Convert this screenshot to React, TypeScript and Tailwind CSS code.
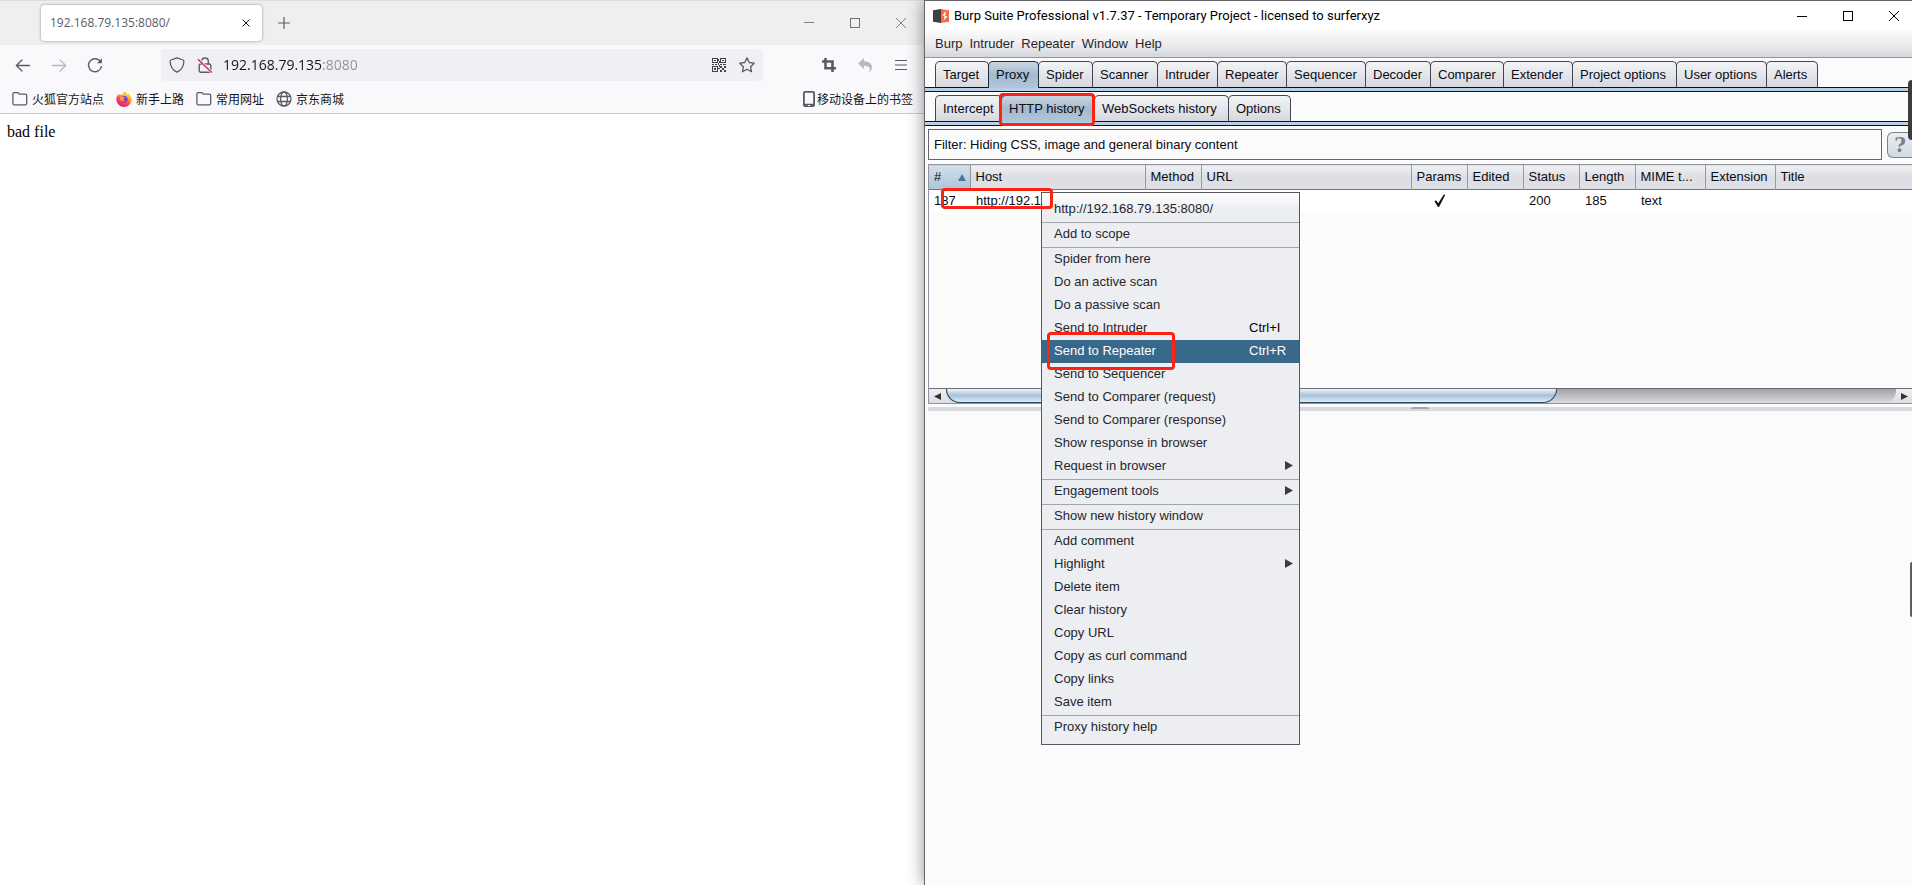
import clsx from "clsx";

const bookmarks = [
  { label: "火狐官方站点", icon: FolderIcon },
  { label: "新手上路", icon: FirefoxIcon },
  { label: "常用网址", icon: FolderIcon },
  { label: "京东商城", icon: GlobeIcon },
];

const menuBar = ["Burp", "Intruder", "Repeater", "Window", "Help"];

type Tab = { label: string; width: string };

const mainTabs: Tab[] = [
  { label: "Target", width: "w-[54px]" },
  { label: "Proxy", width: "w-[51px]" },
  { label: "Spider", width: "w-[55px]" },
  { label: "Scanner", width: "w-[66px]" },
  { label: "Intruder", width: "w-[61px]" },
  { label: "Repeater", width: "w-[70px]" },
  { label: "Sequencer", width: "w-[80px]" },
  { label: "Decoder", width: "w-[66px]" },
  { label: "Comparer", width: "w-[74px]" },
  { label: "Extender", width: "w-[70px]" },
  { label: "Project options", width: "w-[105px]" },
  { label: "User options", width: "w-[91px]" },
  { label: "Alerts", width: "w-[52px]" },
];

const proxyTabs: Tab[] = [
  { label: "Intercept", width: "w-[67px]" },
  { label: "HTTP history", width: "w-[94px]" },
  { label: "WebSockets history", width: "w-[135px]" },
  { label: "Options", width: "w-[63px]" },
];

const columns = [
  { label: "#", width: "w-[41px]" },
  { label: "Host", width: "w-[175px]" },
  { label: "Method", width: "w-[56px]" },
  { label: "URL", width: "w-[210px]" },
  { label: "Params", width: "w-[56px]" },
  { label: "Edited", width: "w-[56px]" },
  { label: "Status", width: "w-[56px]" },
  { label: "Length", width: "w-[56px]" },
  { label: "MIME t...", width: "w-[70px]" },
  { label: "Extension", width: "w-[70px]" },
  { label: "Title", width: "" },
];

type MenuEntry = {
  label: string;
  shortcut?: string;
  submenu?: boolean;
  active?: boolean;
};

const contextMenu: MenuEntry[][] = [
  [{ label: "http://192.168.79.135:8080/" }],
  [{ label: "Add to scope" }],
  [
    { label: "Spider from here" },
    { label: "Do an active scan" },
    { label: "Do a passive scan" },
    { label: "Send to Intruder", shortcut: "Ctrl+I" },
    { label: "Send to Repeater", shortcut: "Ctrl+R", active: true },
    { label: "Send to Sequencer" },
    { label: "Send to Comparer (request)" },
    { label: "Send to Comparer (response)" },
    { label: "Show response in browser" },
    { label: "Request in browser", submenu: true },
  ],
  [{ label: "Engagement tools", submenu: true }],
  [{ label: "Show new history window" }],
  [
    { label: "Add comment" },
    { label: "Highlight", submenu: true },
    { label: "Delete item" },
    { label: "Clear history" },
    { label: "Copy URL" },
    { label: "Copy as curl command" },
    { label: "Copy links" },
    { label: "Save item" },
  ],
  [{ label: "Proxy history help" }],
];

function FolderIcon() {
  return (
    <svg width="16" height="16" viewBox="0 0 16 16" fill="none" stroke="#5b5b66" strokeWidth="1.3">
      <path d="M.9 12.4V3a1.4 1.4 0 0 1 1.4-1.4h3.2c.5 0 .9.2 1.1.6l.7.9h6a1.4 1.4 0 0 1 1.4 1.4v7.9a1.4 1.4 0 0 1-1.4 1.4h-11A1.4 1.4 0 0 1 .9 12.4z" />
    </svg>
  );
}

function FirefoxIcon() {
  return (
    <svg width="16" height="16" viewBox="0 0 16 16">
      <defs>
        <linearGradient id="fox" x1="0.8" y1="0.05" x2="0.25" y2="1">
          <stop offset="0" stopColor="#fff44f" />
          <stop offset="0.3" stopColor="#ffb13b" />
          <stop offset="0.6" stopColor="#ff4a45" />
          <stop offset="1" stopColor="#e31587" />
        </linearGradient>
      </defs>
      <path
        d="M8.7.2c1.7 1 2.3 2.2 2.8 3.3.5-.2.6-.8.5-1.2 2.2 1.4 3.7 3.6 3.7 6.1A7.7 7.5 0 0 1 .3 8.4c0-2.1.7-4 1.9-5.1l.3 1.1c.5-.8 1-1.3 1.7-1.7l.2 1.3c.6-.3 1.4-.4 2.1-.3C6.8 2.3 7.6 1 8.7.2z"
        fill="url(#fox)"
      />
      <circle cx="8.3" cy="8.3" r="3.3" fill="#7a3fe0" />
      <path d="M3.8 6.2c1-.9 2.2-.9 3.2-.2l2.1.5c-.2.8-1.3 1.1-1.8 1.5-.2.7.4 1.5 1.6 1.4-1.3 1.5-4 1-4.7-.9z" fill="#ff9640" />
    </svg>
  );
}

function GlobeIcon() {
  return (
    <svg width="16" height="16" viewBox="0 0 16 16" fill="none" stroke="#5b5b66" strokeWidth="1.3">
      <circle cx="8" cy="8" r="7" />
      <ellipse cx="8" cy="8" rx="3.4" ry="7" />
      <path d="M1.5 5.5h13M1.5 10.5h13" />
    </svg>
  );
}

function ShieldIcon() {
  return (
    <svg width="16" height="16" viewBox="0 0 16 16" fill="none" stroke="#5b5b66" strokeWidth="1.3" strokeLinejoin="round">
      <path d="M8 .8 14 3c.6.2.9.7.9 1.2C14.7 9.5 12 13.2 8 15.2 4 13.2 1.3 9.5 1.1 4.2c0-.5.3-1 .9-1.2z" />
    </svg>
  );
}

function LockSlashIcon() {
  return (
    <svg width="16" height="16" viewBox="0 0 16 16" fill="none" stroke="#5b5b66" strokeWidth="1.4">
      <path d="M4.7 7V4.3a3.3 3.3 0 0 1 6.6 0V7" />
      <rect x="2.2" y="7" width="11.6" height="8.2" rx="1.4" />
      <path d="M1.2 2 15 15.6" stroke="#f0f0f4" strokeWidth="3" />
      <path d="M1 2.2 14.8 15.6" stroke="#e22850" strokeWidth="1.4" />
    </svg>
  );
}

function QrIcon() {
  return (
    <svg width="14" height="14" viewBox="0 0 14 14" fill="#42414d">
      <path
        fillRule="evenodd"
        d="M0 0h6v5H0zM1 1v3h4V1zM8 0h6v5H8zM9 1v3h4V1zM0 8h6v6H0zM1 9v4h4V9z"
      />
      <path d="M2 2h2v1H2zM10 2h2v1h-2zM2 10h2v2H2zM6 1h1v2H6zM7 3h1v2H7zM6 5h1v2H6zM0 6h2v1H0zM3 6h2v1H3zM8 6h2v1H8zM11 6h3v1h-3zM7 7h1v2H7zM8 8h2v2H8zM12 8h2v2h-2zM10 10h2v2h-2zM8 12h2v2H8zM12 12h2v2h-2zM6 10h2v1H6z" />
    </svg>
  );
}

function StarIcon() {
  return (
    <svg width="16" height="16" viewBox="0 0 16 16" fill="none" stroke="#5b5b66" strokeWidth="1.3" strokeLinejoin="round">
      <path d="M8 .9l2.2 4.6 5 .7-3.6 3.5.9 5L8 12.3l-4.5 2.4.9-5L.8 6.2l5-.7z" />
    </svg>
  );
}

function BurpLogo() {
  return (
    <svg width="16" height="14" viewBox="0 0 16 14" className="shrink-0">
      <path d="M0 1.2 8 0v14L0 12.8z" fill="#3f4040" />
      <path d="M8 0l8 1.2v11.6L8 14z" fill="#f76b3c" />
      <path d="M12.8 1.8 9.3 6.8h2.2l-.9 5L14.5 7h-2.3z" fill="#fff" />
    </svg>
  );
}

function BrowserWindow() {
  return (
    <section className="flex min-w-0 flex-col bg-white">
      {/* Tab strip */}
      <div className="flex h-[45px] items-center border-t border-[#dedede] bg-[#efefef]">
        <div className="ml-[41px] flex h-9 w-[221px] items-center justify-between rounded bg-white pr-[11px] pl-[9px] shadow-[0_0_3px_rgba(0,0,0,0.4)]">
          <span className="font-['Open_Sans',sans-serif] text-xs text-[#5b5b66]">192.168.79.135:8080/</span>
          <button aria-label="Close tab">
            <svg width="10" height="10" viewBox="0 0 10 10" stroke="#15141a">
              <path d="M1.5 1.5l7 7M8.5 1.5l-7 7" />
            </svg>
          </button>
        </div>
        <button aria-label="New tab" className="ml-4">
          <svg width="12" height="12" viewBox="0 0 12 12" stroke="#5b5b66" strokeWidth="1.2">
            <path d="M6 0v12M0 6h12" />
          </svg>
        </button>
        <div className="ml-auto flex">
          <button aria-label="Minimize" className="flex w-[46px] justify-center">
            <svg width="10" height="10" viewBox="0 0 10 10" stroke="#808080">
              <path d="M0 4.5h10" />
            </svg>
          </button>
          <button aria-label="Maximize" className="flex w-[46px] justify-center">
            <svg width="10" height="10" viewBox="0 0 10 10" fill="none" stroke="#707070">
              <rect x=".5" y=".5" width="9" height="9" />
            </svg>
          </button>
          <button aria-label="Close" className="flex w-[46px] justify-center">
            <svg width="10" height="10" viewBox="0 0 10 10" stroke="#808080">
              <path d="M0 0l10 10M10 0L0 10" />
            </svg>
          </button>
        </div>
      </div>

      {/* Navigation */}
      <div className="flex h-10 items-center bg-[#f9f9fb] px-[5px]">
        <button aria-label="Back" className="flex w-9 justify-center">
          <svg width="16" height="16" viewBox="0 0 16 16" fill="none" stroke="#5b5b66" strokeWidth="1.3" strokeLinecap="round" strokeLinejoin="round">
            <path d="M14.5 8.5h-13M7 3 1.3 8.5 7 14" />
          </svg>
        </button>
        <button aria-label="Forward" className="flex w-9 justify-center">
          <svg width="16" height="16" viewBox="0 0 16 16" fill="none" stroke="#b9b9bf" strokeWidth="1.3" strokeLinecap="round" strokeLinejoin="round">
            <path d="M1.5 8.5h13M9 3l5.7 5.5L9 14" />
          </svg>
        </button>
        <button aria-label="Reload" className="flex w-9 justify-center">
          <svg width="16" height="16" viewBox="0 0 16 16" fill="none" stroke="#5b5b66" strokeWidth="1.4">
            <path d="M13.8 5.2A6.5 6.5 0 1 0 14.5 9" />
            <path d="M14.9 1.3v5H10z" fill="#5b5b66" stroke="none" />
          </svg>
        </button>
        <div className="mx-12 flex h-8 flex-1 items-center rounded bg-[#f0f0f4] px-0.5">
          <button aria-label="Tracking protection" className="flex w-7 justify-center">
            <ShieldIcon />
          </button>
          <button aria-label="Connection not secure" className="flex w-7 justify-center">
            <LockSlashIcon />
          </button>
          <input
            aria-label="Address"
            defaultValue="192.168.79.135:8080"
            className="ml-1 min-w-0 flex-1 bg-linear-to-r from-[#15141a] from-[98px] to-[#8f8f9d] to-[98px] bg-clip-text font-['Open_Sans',sans-serif] text-sm text-transparent outline-none"
          />
          <button aria-label="QR code" className="flex w-7 justify-center">
            <QrIcon />
          </button>
          <button aria-label="Bookmark this page" className="flex w-7 justify-center">
            <StarIcon />
          </button>
        </div>
        <button aria-label="Screenshot" className="flex w-9 justify-center">
          <svg width="14" height="14" viewBox="0 0 14 14" fill="none" stroke="#5b5b66" strokeWidth="2.6">
            <path d="M3.5 0v10.2H14M0 3.5h10.5V14" />
          </svg>
        </button>
        <button aria-label="Undo" className="flex w-9 justify-center">
          <svg width="14" height="14" viewBox="0 0 14 14" fill="#b9b9bf">
            <path d="M6 0v3.3c4.7 0 8 2.2 8 6 0 2.5-1.7 4.3-4 4.7 1.5-1 2-2.2 1.7-3.5C11.3 8.6 9.3 7.7 6 7.7V11L0 5.5z" />
          </svg>
        </button>
        <button aria-label="Application menu" className="flex w-9 justify-center">
          <svg width="12" height="12" viewBox="0 0 12 12" stroke="#5b5b66" strokeWidth="1.2">
            <path d="M0 1.5h12M0 6h12M0 10.5h12" />
          </svg>
        </button>
      </div>

      {/* Bookmarks */}
      <nav className="flex h-[29px] items-center gap-3 border-b border-[#cccccc] bg-[#f9f9fb] pr-[11px] pl-3 font-['Noto_Sans_CJK_SC',sans-serif] text-xs text-[#15141a]">
        {bookmarks.map((b) => (
          <a key={b.label} href="#" className="flex items-center gap-1">
            <b.icon />
            {b.label}
          </a>
        ))}
        <a href="#" className="ml-auto flex items-center gap-0.5">
          <svg width="12" height="16" viewBox="0 0 12 16">
            <path
              fill="#5b5b66"
              fillRule="evenodd"
              d="M2 0h8a2 2 0 0 1 2 2v12a2 2 0 0 1-2 2H2a2 2 0 0 1-2-2V2a2 2 0 0 1 2-2zM1.8 1.8v11h8.4v-11zM4.8 14v1h2.4v-1z"
            />
          </svg>
          移动设备上的书签
        </a>
      </nav>

      <main className="px-[7px] py-2 font-['Liberation_Serif',serif] text-base leading-5 text-black">bad file</main>
    </section>
  );
}

function TabRow({ tabs, selected }: { tabs: Tab[]; selected: string }) {
  return (
    <div>
      <div role="tablist" className="flex pt-[3px] pl-[10px]">
        {tabs.map(({ label, width }) => (
          <button
            key={label}
            role="tab"
            aria-selected={label === selected}
            className={clsx(
              "-mr-px shrink-0 rounded-t-[5px] border border-b-0 pl-[7px] text-left whitespace-nowrap",
              width,
              label === selected
                ? "relative -mb-px h-[27px] border-[#1c2942] bg-linear-to-b from-[#c9d6e0] via-[#a4b9cc] to-[#b0c6dc] pb-px"
                : "h-[26px] border-[#45454f] bg-linear-to-b from-[#f3f4f6] to-[#d6d8df]"
            )}
          >
            {label}
          </button>
        ))}
      </div>
      <div className="h-[5px] border-y border-[#0b1024] bg-[#b8cfe5]" />
    </div>
  );
}

function HistoryTable() {
  return (
    <table className="w-full table-fixed border-collapse text-left">
      <thead>
        <tr className="h-[25px] border-t border-b border-t-[#9597a1] border-b-[#72747c] bg-linear-to-b from-[#f0f1f3] via-[#dcdee3] to-[#dfe1e6]">
          {columns.map((col) => (
            <th
              key={col.label}
              className={clsx(
                "border-r border-[#9597a1] p-0 pl-[5px] font-normal whitespace-nowrap last:border-r-0",
                col.width,
                col.label === "#" && "bg-linear-to-b from-[#d3dfe9] to-[#adc4d8]"
              )}
            >
              {col.label === "#" ? (
                <span className="flex items-center justify-between pr-1">
                  #
                  <svg width="8" height="7" viewBox="0 0 8 7">
                    <path d="M4 0l4 7H0z" fill="#4a73a5" />
                  </svg>
                </span>
              ) : (
                col.label
              )}
            </th>
          ))}
        </tr>
      </thead>
      <tbody>
        <tr className="h-[22px] bg-white">
          <td className="p-0 pl-[5px]">187</td>
          <td className="p-0 pl-1.5">http://192.1</td>
          <td />
          <td />
          <td className="p-0 pl-0.5">
            <svg width="12" height="13" viewBox="0 0 12 13" className="mx-auto">
              <path d="M.5 7.5 2 6.3l2.2 3L10 .3l1.2.6L5 13H4z" fill="#111" />
            </svg>
          </td>
          <td />
          <td className="p-0 pl-1.5">200</td>
          <td className="p-0 pl-1.5">185</td>
          <td className="p-0 pl-1.5">text</td>
          <td />
          <td />
        </tr>
      </tbody>
    </table>
  );
}

function ScrollBar() {
  return (
    <div className="flex h-[15px] items-stretch border-t border-[#6d6e75] bg-linear-to-b from-[#eeeff1] to-[#dcdde2]">
      <button aria-label="Scroll left" className="flex w-[17px] items-center justify-center">
        <svg width="7" height="7" viewBox="0 0 7 7">
          <path d="M7 0v7L0 3.5z" fill="#333" />
        </svg>
      </button>
      <div className="grid flex-1 grid-cols-[9fr_5fr] rounded-b-xl bg-linear-to-b from-[#a0a2a8] to-[#d9dbe1]">
        <div className="rounded-b-2xl border border-t-0 border-[#2b4560] bg-linear-to-b from-[#eef4f9] via-[#a9c1d8] to-[#dcf0f8]" />
      </div>
      <button aria-label="Scroll right" className="flex w-4 items-center justify-center">
        <svg width="7" height="7" viewBox="0 0 7 7">
          <path d="M0 0v7l7-3.5z" fill="#333" />
        </svg>
      </button>
    </div>
  );
}

function ContextMenu() {
  return (
    <div
      role="menu"
      className="absolute top-[191px] left-[116px] w-[259px] border border-[#57585e] bg-[#edeef2] bg-linear-to-b from-white from-0% via-[#edeef2] via-[3%] to-[#edeef2] py-[5px] text-[#26262b]"
    >
      {contextMenu.map((group, i) => (
        <div key={i} className={clsx(i > 0 && "mt-px border-t border-[#a3a5ad]")}>
          {group.map((item) => (
            <button
              key={item.label}
              role="menuitem"
              className={clsx(
                "flex h-[23px] w-full items-center pr-[6px] pb-0.5 pl-3 text-left",
                item.active && "bg-[#39698a] text-white"
              )}
            >
              <span className="flex-1">{item.label}</span>
              {item.shortcut && (
                <span className={clsx("w-11", !item.active && "text-black")}>{item.shortcut}</span>
              )}
              {item.submenu && (
                <svg width="8" height="9" viewBox="0 0 8 9">
                  <path d="M0 0v9l8-4.5z" fill="#3c3c42" />
                </svg>
              )}
            </button>
          ))}
        </div>
      ))}
    </div>
  );
}

function BurpWindow() {
  return (
    <section className="relative flex min-w-0 flex-col border-t border-l border-[#66666a] bg-[#fbfbfb] font-['Liberation_Sans',sans-serif] text-[13px] leading-4 text-[#0b0b14] shadow-[0_0_16px_rgba(0,0,0,0.45)]">
      {/* Title bar */}
      <header className="flex h-[30px] items-center gap-[5px] bg-white pr-[13px] pl-2 text-black">
        <BurpLogo />
        <h1 className="font-[Roboto,sans-serif] text-[13px] whitespace-nowrap">
          Burp Suite Professional v1.7.37 - Temporary Project - licensed to surferxyz
        </h1>
        <div className="ml-auto flex gap-9">
          <button aria-label="Minimize">
            <svg width="10" height="10" viewBox="0 0 10 10" stroke="#000">
              <path d="M0 5.5h10" />
            </svg>
          </button>
          <button aria-label="Maximize">
            <svg width="10" height="10" viewBox="0 0 10 10" fill="none" stroke="#000">
              <rect x=".5" y=".5" width="9" height="9" />
            </svg>
          </button>
          <button aria-label="Close">
            <svg width="10" height="10" viewBox="0 0 10 10" stroke="#000">
              <path d="M0 0l10 10M10 0L0 10" />
            </svg>
          </button>
        </div>
      </header>

      <div className="flex h-[27px] items-center gap-[7px] border-b border-[#9496a0] bg-linear-to-b from-[#fafafa] via-[#ededf0] to-[#d5d7de] pl-[10px] text-[#26262b]">
        {menuBar.map((item) => (
          <button key={item}>{item}</button>
        ))}
      </div>

      <TabRow tabs={mainTabs} selected="Proxy" />
      <TabRow tabs={proxyTabs} selected="HTTP history" />

      {/* Filter */}
      <div className="flex items-center gap-[5px] pt-[3px] pl-[3px]">
        <button className="h-[31px] flex-1 border border-[#66666a] px-[5px] text-left">
          Filter: Hiding CSS, image and general binary content
        </button>
        <button
          aria-label="Help"
          className="h-[26px] w-[25px] rounded-l-md border border-r-0 border-[#7e8088] bg-linear-to-b from-[#eceef1] to-[#d0dae4] font-['DejaVu_Serif',serif] text-xl leading-6 font-bold text-[#7c7e84]"
        >
          ?
        </button>
      </div>

      {/* History list */}
      <div className="mt-1 ml-[3px] flex h-[240px] flex-col border-b border-l border-[#9092a0]">
        <div className="min-h-0 flex-1">
          <HistoryTable />
        </div>
        <ScrollBar />
      </div>

      <div className="mt-[3px] ml-[3px] flex h-1 justify-center bg-[#d6d9e0]">
        <div className="h-0.5 w-[18px] rounded-t-sm bg-[#a3a5b2]" />
      </div>

      <ContextMenu />

      {/* Highlight marks */}
      <div className="pointer-events-none absolute top-[92px] left-[74px] h-[33px] w-[96px] rounded border-3 border-[#fb2314]" />
      <div className="pointer-events-none absolute top-[187px] left-4 h-[21px] w-[112px] rounded border-3 border-[#fb2314]" />
      <div className="pointer-events-none absolute top-[331px] left-[122px] h-[38px] w-[128px] rounded border-3 border-[#fb2314]" />

      {/* Edge handles */}
      <div className="absolute top-[79px] right-0 h-[60px] w-1 rounded-l bg-[#3d3b3a]" />
      <div className="absolute top-[561px] right-0 h-[55px] w-0.5 rounded-l bg-[#5e5e5e]" />
    </section>
  );
}

export default function App() {
  return (
    <div className="grid min-h-screen grid-cols-[924fr_988fr] overflow-hidden">
      <BrowserWindow />
      <BurpWindow />
    </div>
  );
}
